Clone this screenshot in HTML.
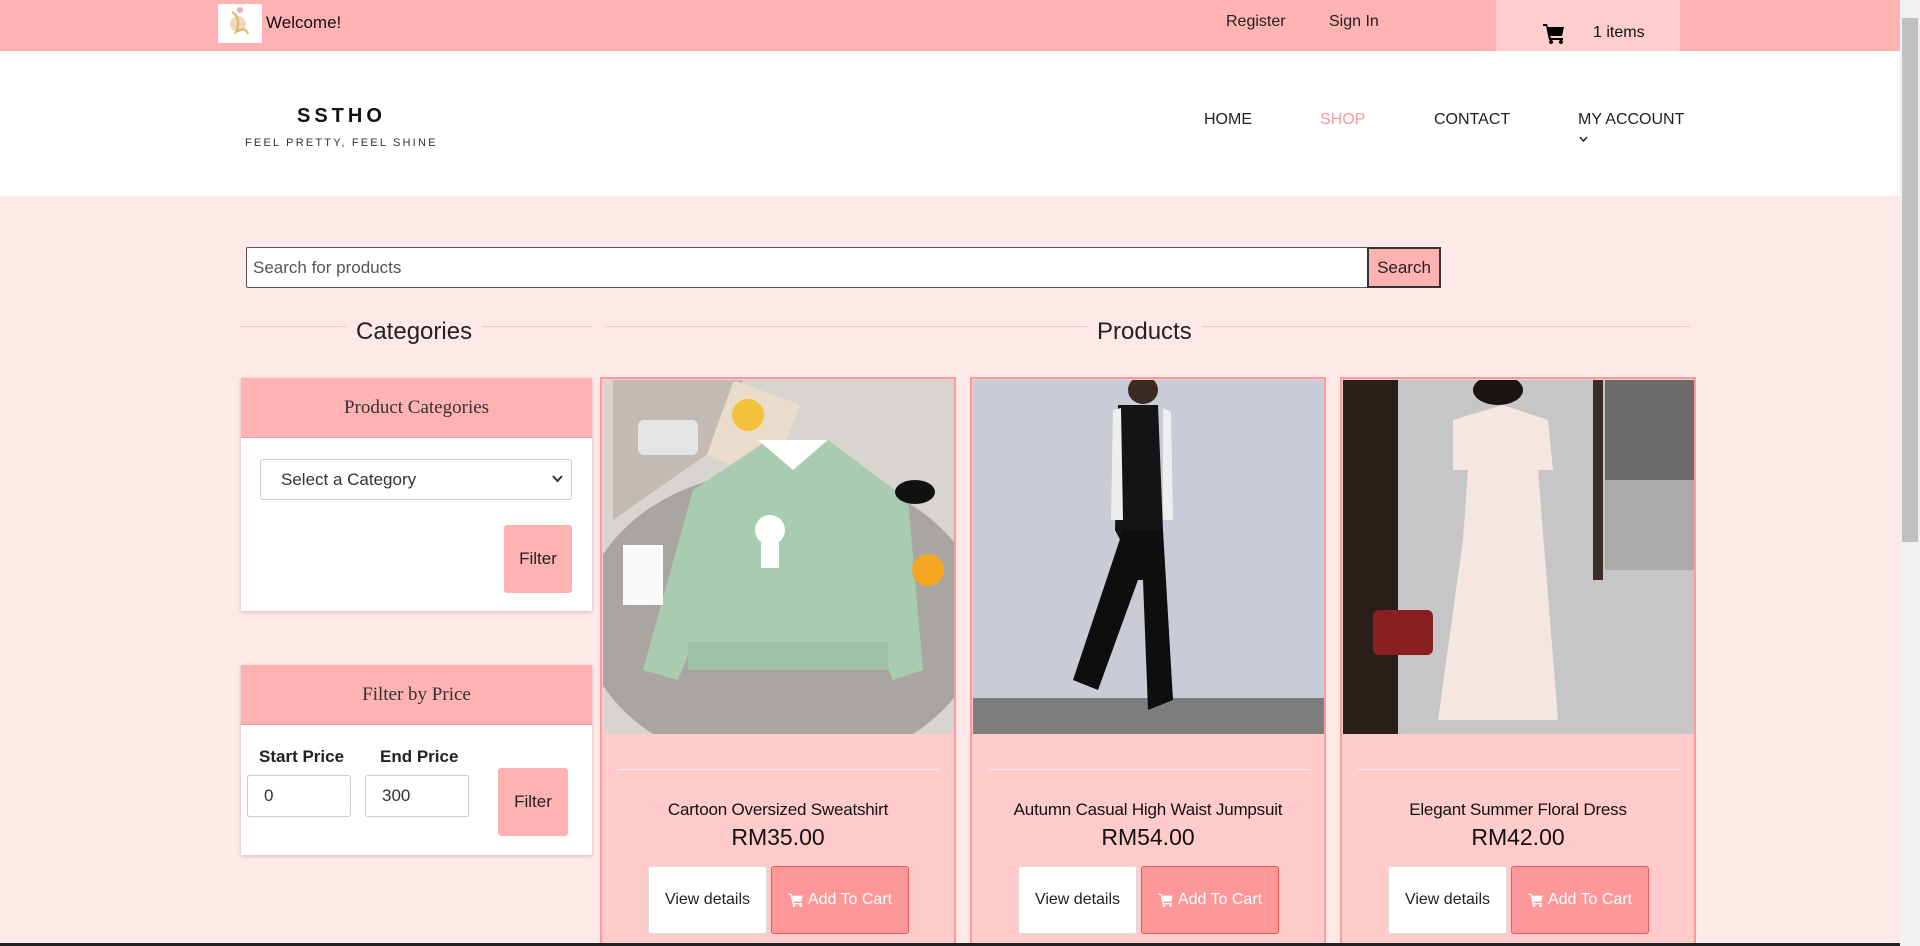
<!DOCTYPE html>
<html style="width:1920px;height:946px;overflow:hidden"><head><meta charset="utf-8"><style>
*{box-sizing:border-box;margin:0;padding:0}
body{width:1920px;height:946px;overflow:hidden;background:#ffe9e8;font-family:"Liberation Sans",sans-serif;position:relative;color:#222}
.a{position:absolute}
.top{left:0;top:0;width:1900px;height:51px;background:#feb3b2}
.hdr{left:0;top:51px;width:1900px;height:145px;background:#fff}
.sb{left:1900px;top:0;width:20px;height:946px;background:#f1f1f1}
.sbt{left:1902px;top:18px;width:16px;height:524px;background:#c1c1c1}
.t{white-space:nowrap;line-height:1}
.card{background:#fff;box-shadow:0 1px 4px rgba(0,0,0,.2)}
.ch{background:#feb3b2;border-bottom:1px solid #f99;font-family:"Liberation Serif",serif;font-size:19px;color:#333;text-align:center}
.btnp{background:#feb3b2;border-radius:3px;font-size:17px;display:flex;align-items:center;justify-content:center}
.inp{background:#fff;border:1px solid #ccc;border-radius:3px;font-size:17px;padding-left:16px;display:flex;align-items:center;color:#333}
.pc{background:#ffcccb;border:2px solid #ff9a9a;border-bottom:0;width:356px;top:377px;height:566px;overflow:hidden}
.pc .im{position:absolute;left:1px;top:1px;width:352px;height:354px;overflow:hidden}
.pc hr{position:absolute;left:16px;top:390px;width:322px;border:0;border-top:1px solid #eee}
.pc .nm{position:absolute;left:0;width:352px;top:422px;text-align:center;font-size:17px;color:#111;letter-spacing:-.2px}
.pc .pr{position:absolute;left:0;width:352px;top:447px;text-align:center;font-size:23px;color:#111}
.vd{position:absolute;top:487px;width:119px;height:68px;background:#fff;border:1px solid #ddd;border-radius:3px;font-size:16px;display:flex;align-items:center;justify-content:center}
.ac{position:absolute;top:487px;width:138px;height:68px;background:#fe9797;border:1px solid #e55;border-radius:3px;font-size:16px;color:#fff;display:flex;align-items:center;justify-content:center;gap:4px}
</style></head><body>
<div class="a top"></div>
<div class="a" style="left:218px;top:4px;width:44px;height:39px;background:#fff"><svg width="44" height="39"><circle cx="20" cy="20" r="8" fill="#f3d7c0"/><path d="M14 8 Q24 14 18 28 Q28 22 30 30" stroke="#d8bb6a" stroke-width="2" fill="none"/><circle cx="22" cy="6" r="3" fill="#f5a9b8"/></svg></div>
<div class="a t" style="left:266px;top:14px;font-size:17px;color:#111">Welcome!</div>
<div class="a t" style="left:1226px;top:14px;font-size:16px;color:#222">Register</div>
<div class="a t" style="left:1329px;top:14px;font-size:16px;color:#222">Sign In</div>
<div class="a" style="left:1496px;top:0;width:184px;height:51px;background:#ffcdcd;border-radius:0 0 3px 3px"></div>
<svg class="a" style="left:1543px;top:23px" width="22" height="21" viewBox="0 0 22 21"><path d="M0 1h4l1 3h16l-2 9H7l1 2h12v2H6L3 3H0z" fill="#000"/><circle cx="8" cy="19" r="2" fill="#000"/><circle cx="18" cy="19" r="2" fill="#000"/></svg>
<div class="a t" style="left:1593px;top:25px;font-size:16px;color:#111">1 items</div>
<div class="a hdr"></div>
<div class="a t" style="left:297px;top:106px;font-size:20px;font-weight:bold;letter-spacing:4px;color:#111">SSTHO</div>
<div class="a t" style="left:245px;top:138px;font-size:11px;letter-spacing:2.2px;color:#333">FEEL PRETTY, FEEL SHINE</div>
<div class="a t" style="left:1204px;top:112px;font-size:16px;color:#222">HOME</div>
<div class="a t" style="left:1320px;top:112px;font-size:16px;color:#fc9a9a">SHOP</div>
<div class="a t" style="left:1434px;top:112px;font-size:16px;color:#222">CONTACT</div>
<div class="a t" style="left:1578px;top:112px;font-size:16px;color:#222">MY ACCOUNT</div>
<svg class="a" style="left:1579px;top:136px" width="9" height="7"><path d="M1 1l3.5 4L8 1" stroke="#222" stroke-width="1.5" fill="none"/></svg>
<div class="a sb"></div><div class="a sbt"></div>
<div class="a inp" style="left:246px;top:247px;width:1122px;height:41px;border:1px solid #555;border-radius:2px;padding-left:6px;color:#555">Search for products</div>
<div class="a" style="left:1367px;top:247px;width:74px;height:41px;background:#feb3b2;border:2px solid #333;font-size:17px;display:flex;align-items:center;justify-content:center">Search</div>
<div class="a" style="left:240px;top:326px;width:353px;border-top:1px solid #f5c6c6"></div>
<div class="a" style="left:605px;top:326px;width:1085px;border-top:1px solid #f5c6c6"></div>
<div class="a t" style="left:346px;top:320px;padding:0 10px;background:#ffe9e8;font-size:24px;color:#222">Categories</div>
<div class="a t" style="left:1087px;top:320px;padding:0 10px;background:#ffe9e8;font-size:24px;color:#222">Products</div>
<div class="a card" style="left:241px;top:378px;width:351px;height:233px">
<div class="ch" style="height:60px;line-height:60px">Product Categories</div></div>
<div class="a inp" style="left:260px;top:459px;width:312px;height:41px;padding-left:20px">Select a Category</div>
<svg class="a" style="left:552px;top:475px" width="11" height="8"><path d="M1 1l4.5 5L10 1" stroke="#333" stroke-width="2" fill="none"/></svg>
<div class="a btnp" style="left:504px;top:525px;width:68px;height:68px">Filter</div>
<div class="a card" style="left:241px;top:665px;width:351px;height:190px">
<div class="ch" style="height:60px;line-height:60px">Filter by Price</div></div>
<div class="a t" style="left:259px;top:748px;font-size:17px;font-weight:bold;color:#222">Start Price</div>
<div class="a t" style="left:380px;top:748px;font-size:17px;font-weight:bold;color:#222">End Price</div>
<div class="a inp" style="left:247px;top:775px;width:104px;height:42px">0</div>
<div class="a inp" style="left:365px;top:775px;width:104px;height:42px">300</div>
<div class="a btnp" style="left:498px;top:768px;width:70px;height:68px">Filter</div>

<div class="a pc" style="left:600px"><div class="im"><svg width="352" height="354"><rect width="352" height="354" fill="#d8d4cf"/><ellipse cx="180" cy="240" rx="200" ry="150" fill="#a9a6a2"/><path d="M10 0h130l-30 70L10 140z" fill="#b5aaa0" opacity=".6"/><rect x="115" y="10" width="70" height="80" rx="4" fill="#eadccb" transform="rotate(20 150 50)"/><circle cx="145" cy="35" r="16" fill="#f3c13a"/><path d="M90 110 L165 60 L225 60 L305 120 L320 290 L290 300 L280 275 L85 275 L75 300 L40 290 Z" fill="#a9cbb0"/><path d="M155 60 L190 90 L225 60 Z" fill="#fff"/><rect x="85" y="262" width="200" height="28" fill="#9fc2a6"/><circle cx="167" cy="150" r="15" fill="#fff"/><rect x="158" y="163" width="18" height="25" fill="#fff"/><ellipse cx="312" cy="112" rx="20" ry="12" fill="#111"/><circle cx="325" cy="190" r="16" fill="#f5a623"/><rect x="20" y="165" width="40" height="60" fill="#fafafa"/><rect x="35" y="40" width="60" height="35" rx="6" fill="#e5e5e5"/></svg></div>
<hr><div class="nm t">Cartoon Oversized Sweatshirt</div><div class="pr t">RM35.00</div>
<div class="vd" style="left:46px">View details</div><div class="ac" style="left:169px"><svg width="16" height="14" viewBox="0 0 22 21"><path d="M0 1h4l1 3h16l-2 9H7l1 2h12v2H6L3 3H0z" fill="#fff"/><circle cx="8" cy="19" r="2" fill="#fff"/><circle cx="18" cy="19" r="2" fill="#fff"/></svg>Add To Cart</div></div>

<div class="a pc" style="left:970px"><div class="im"><svg width="352" height="354"><rect width="352" height="354" fill="#c9ccd6"/><rect y="318" width="352" height="36" fill="#7d7c7e"/><path d="M145 25 L185 25 L190 150 L178 175 L155 175 L142 150Z" fill="#141414"/><path d="M140 30 L148 28 L150 140 L138 140Z" fill="#eee"/><path d="M190 28 L198 32 L200 140 L190 140Z" fill="#eee"/><path d="M150 150 L190 150 L200 320 L175 330 L170 200 L165 200 L125 310 L100 300Z" fill="#0e0e0e"/><ellipse cx="170" cy="10" rx="15" ry="14" fill="#3a2a24"/></svg></div>
<hr><div class="nm t">Autumn Casual High Waist Jumpsuit</div><div class="pr t">RM54.00</div>
<div class="vd" style="left:46px">View details</div><div class="ac" style="left:169px"><svg width="16" height="14" viewBox="0 0 22 21"><path d="M0 1h4l1 3h16l-2 9H7l1 2h12v2H6L3 3H0z" fill="#fff"/><circle cx="8" cy="19" r="2" fill="#fff"/><circle cx="18" cy="19" r="2" fill="#fff"/></svg>Add To Cart</div></div>

<div class="a pc" style="left:1340px"><div class="im"><svg width="352" height="354"><rect width="352" height="354" fill="#c6c6c8"/><rect x="0" width="55" height="354" fill="#2a1e1a"/><rect x="250" width="10" height="200" fill="#3c2c25"/><rect x="262" y="0" width="90" height="100" fill="#6a6a68"/><rect x="262" y="100" width="90" height="90" fill="#aaa"/><path d="M110 40 L160 25 L205 40 L210 90 L195 90 L215 340 L95 340 L120 160 L125 90 L110 90Z" fill="#f5e6e0"/><ellipse cx="155" cy="10" rx="25" ry="15" fill="#1a1412"/><rect x="30" y="230" width="60" height="45" rx="6" fill="#8a1f22"/></svg></div>
<hr><div class="nm t">Elegant Summer Floral Dress</div><div class="pr t">RM42.00</div>
<div class="vd" style="left:46px">View details</div><div class="ac" style="left:169px"><svg width="16" height="14" viewBox="0 0 22 21"><path d="M0 1h4l1 3h16l-2 9H7l1 2h12v2H6L3 3H0z" fill="#fff"/><circle cx="8" cy="19" r="2" fill="#fff"/><circle cx="18" cy="19" r="2" fill="#fff"/></svg>Add To Cart</div></div>
<div class="a" style="left:0;top:943px;width:1900px;height:3px;background:#222"></div>
</body></html>
